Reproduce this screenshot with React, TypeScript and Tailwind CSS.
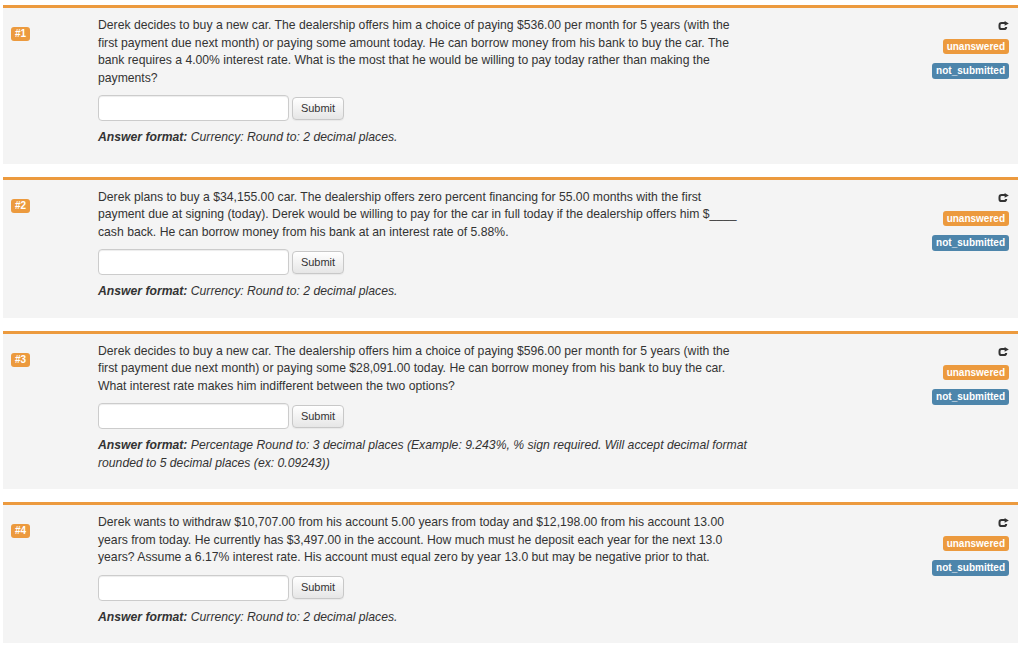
import React from "react";

type Q = {
  n: string;
  lines: string[];
  fmt: string[];
};

const questions: Q[] = [
  {
    n: "#1",
    lines: [
      "Derek decides to buy a new car. The dealership offers him a choice of paying $536.00 per month for 5 years (with the",
      "first payment due next month) or paying some amount today. He can borrow money from his bank to buy the car. The",
      "bank requires a 4.00% interest rate. What is the most that he would be willing to pay today rather than making the",
      "payments?",
    ],
    fmt: ["Currency: Round to: 2 decimal places."],
  },
  {
    n: "#2",
    lines: [
      "Derek plans to buy a $34,155.00 car. The dealership offers zero percent financing for 55.00 months with the first",
      "payment due at signing (today). Derek would be willing to pay for the car in full today if the dealership offers him $____",
      "cash back. He can borrow money from his bank at an interest rate of 5.88%.",
    ],
    fmt: ["Currency: Round to: 2 decimal places."],
  },
  {
    n: "#3",
    lines: [
      "Derek decides to buy a new car. The dealership offers him a choice of paying $596.00 per month for 5 years (with the",
      "first payment due next month) or paying some $28,091.00 today. He can borrow money from his bank to buy the car.",
      "What interest rate makes him indifferent between the two options?",
    ],
    fmt: [
      "Percentage Round to: 3 decimal places (Example: 9.243%, % sign required. Will accept decimal format",
      "rounded to 5 decimal places (ex: 0.09243))",
    ],
  },
  {
    n: "#4",
    lines: [
      "Derek wants to withdraw $10,707.00 from his account 5.00 years from today and $12,198.00 from his account 13.00",
      "years from today. He currently has $3,497.00 in the account. How much must he deposit each year for the next 13.0",
      "years? Assume a 6.17% interest rate. His account must equal zero by year 13.0 but may be negative prior to that.",
    ],
    fmt: ["Currency: Round to: 2 decimal places."],
  },
];

function RetryIcon() {
  return (
    <svg width="11" height="10" viewBox="0 0 11 10" className="block">
      <path
        d="M7.4 2.1 H3.7 Q1.5 2.1 1.5 4.3 V5.9 Q1.5 8.1 3.7 8.1 H6 Q8.2 8.1 8.2 6"
        fill="none"
        stroke="#333"
        strokeWidth="2"
      />
      <path d="M6.6 0 L10.8 2.4 L6.6 4.8 Z" fill="#333" />
    </svg>
  );
}

function Card({ q }: { q: Q }) {
  return (
    <div className="flex border-t-[3px] border-[#ec9a3e] bg-[#f4f4f4]">
      <div className="w-[95px] shrink-0 pl-[8px] pt-[12px]">
        <span className="inline-block rounded-[3px] bg-[#ec9a3e] px-[4px] text-[10px] font-bold leading-[14px] text-white">
          {q.n}
        </span>
      </div>
      <div className="w-[680px] shrink-0 pt-[9px] pb-[17px] text-[12.2px] leading-[17.5px]">
        <p className="whitespace-nowrap">
          {q.lines.map((l, i) => (
            <React.Fragment key={i}>
              {l}
              {i < q.lines.length - 1 && <br />}
            </React.Fragment>
          ))}
        </p>
        <div className="mt-[8px] flex items-center gap-[3px]">
          <div className="h-[26px] w-[191px] rounded-[4px] border border-[#cccccc] bg-white shadow-[inset_0_1px_1px_rgba(0,0,0,0.075)]" />
          <button className="h-[23px] w-[52px] rounded-[4px] border border-[#c8c8c8] bg-gradient-to-b from-white to-[#e6e6e6] text-[11px] leading-none text-[#333] shadow-[0_1px_1px_rgba(0,0,0,0.05)]">
            Submit
          </button>
        </div>
        <p className="mt-[8px] whitespace-nowrap italic">
          <span className="font-bold">Answer format:</span>{" "}
          {q.fmt.map((l, i) => (
            <React.Fragment key={i}>
              {l}
              {i < q.fmt.length - 1 && <br />}
            </React.Fragment>
          ))}
        </p>
      </div>
      <div className="flex flex-1 flex-col items-end pr-[9px] pt-[13px]">
        <RetryIcon />
        <span className="mt-[8px] rounded-[3px] bg-[#ec9a3e] px-[4px] text-[10px] font-bold leading-[15px] text-white">
          unanswered
        </span>
        <span className="mt-[9px] rounded-[3px] bg-[#4d85ab] px-[4px] text-[10px] font-bold leading-[16px] text-white">
          not_submitted
        </span>
      </div>
    </div>
  );
}

export default function App() {
  return (
    <div className="min-h-screen bg-white px-[3px] pt-[5px] font-['Liberation_Sans',Arial,sans-serif] text-[#333]">
      <div className="flex w-[1015px] flex-col gap-[13px]">
        {questions.map((q) => (
          <Card key={q.n} q={q} />
        ))}
      </div>
    </div>
  );
}
